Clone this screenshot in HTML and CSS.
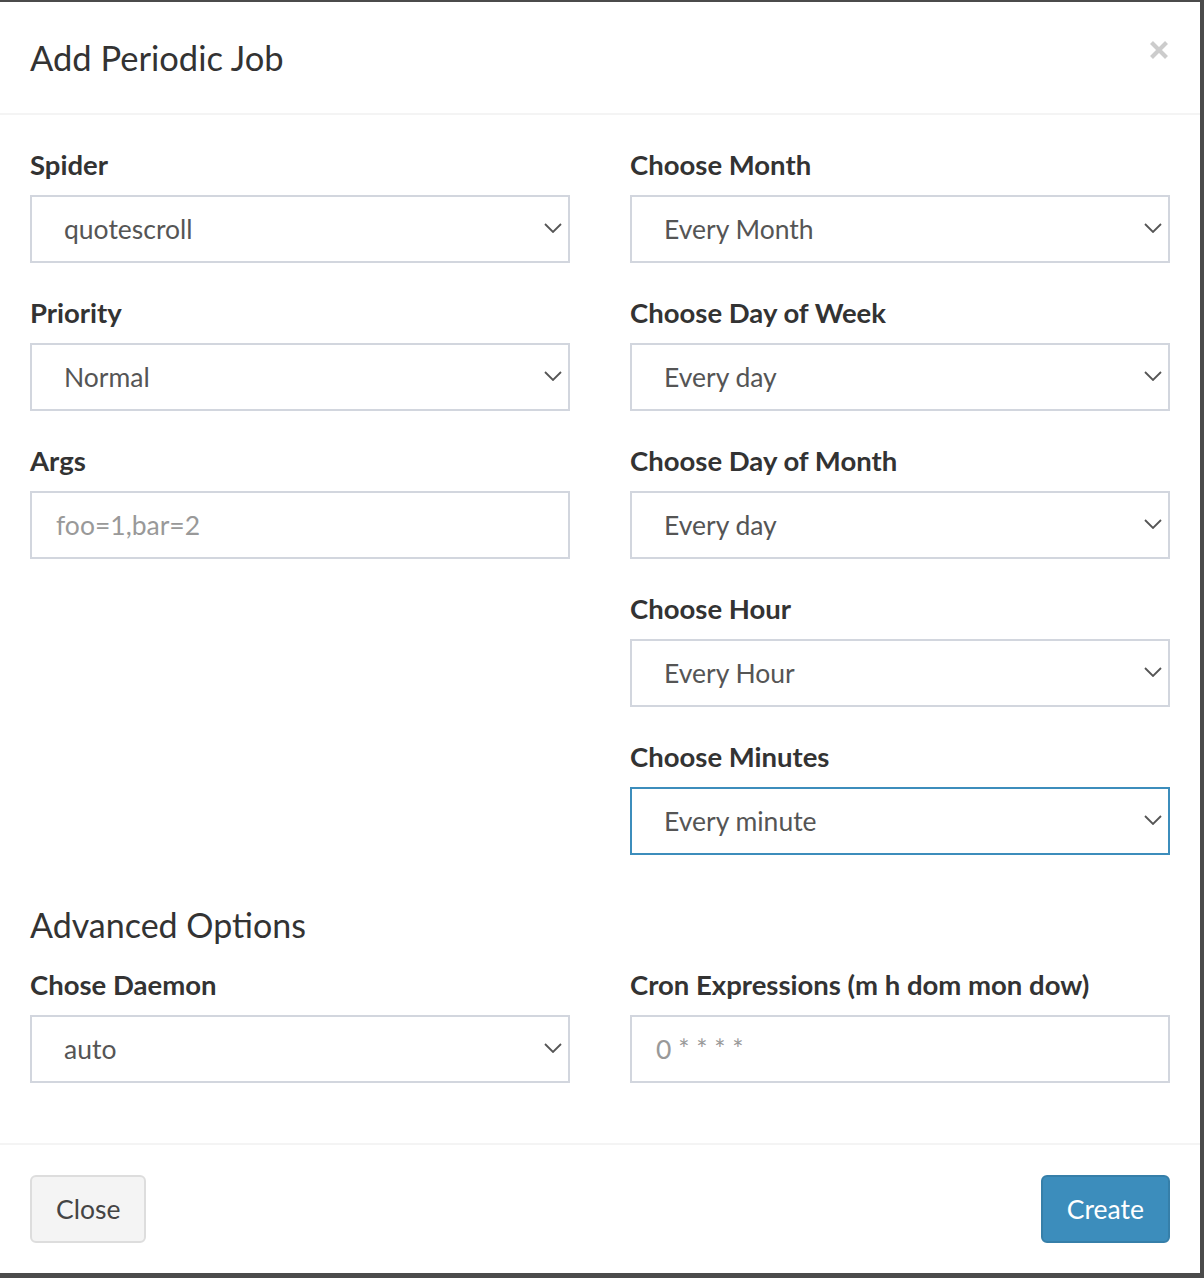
FILE: index.html
```html
<!DOCTYPE html>
<html>
<head>
<meta charset="utf-8">
<title>Add Periodic Job</title>
<link rel="stylesheet" href="styles.css">
</head>
<body>
<div class="modal">
  <div class="modal-header">
    <h4 class="modal-title">Add Periodic Job</h4>
    <button class="close" type="button" aria-label="Close">
      <svg width="20" height="20" viewBox="0 0 20 20"><path d="M2.5 2.5 L17.5 17.5 M17.5 2.5 L2.5 17.5" stroke="#cccccc" stroke-width="4.2" stroke-linecap="butt"/></svg>
    </button>
  </div>
  <div class="modal-body">
    <div class="row">
      <div class="col">
        <div class="form-group">
          <label>Spider</label>
          <div class="select-wrap"><select class="form-control"><option>quotescroll</option></select><svg class="chev" width="18" height="10" viewBox="0 0 18 10"><path d="M1 1 L9 9 L17 1" fill="none" stroke="#555" stroke-width="1.8"/></svg></div>
        </div>
        <div class="form-group">
          <label>Priority</label>
          <div class="select-wrap"><select class="form-control"><option>Normal</option></select><svg class="chev" width="18" height="10" viewBox="0 0 18 10"><path d="M1 1 L9 9 L17 1" fill="none" stroke="#555" stroke-width="1.8"/></svg></div>
        </div>
        <div class="form-group">
          <label>Args</label>
          <input class="form-control input" type="text" placeholder="foo=1,bar=2">
        </div>
      </div>
      <div class="col">
        <div class="form-group">
          <label>Choose Month</label>
          <div class="select-wrap"><select class="form-control"><option>Every Month</option></select><svg class="chev" width="18" height="10" viewBox="0 0 18 10"><path d="M1 1 L9 9 L17 1" fill="none" stroke="#555" stroke-width="1.8"/></svg></div>
        </div>
        <div class="form-group">
          <label>Choose Day of Week</label>
          <div class="select-wrap"><select class="form-control"><option>Every day</option></select><svg class="chev" width="18" height="10" viewBox="0 0 18 10"><path d="M1 1 L9 9 L17 1" fill="none" stroke="#555" stroke-width="1.8"/></svg></div>
        </div>
        <div class="form-group">
          <label>Choose Day of Month</label>
          <div class="select-wrap"><select class="form-control"><option>Every day</option></select><svg class="chev" width="18" height="10" viewBox="0 0 18 10"><path d="M1 1 L9 9 L17 1" fill="none" stroke="#555" stroke-width="1.8"/></svg></div>
        </div>
        <div class="form-group">
          <label>Choose Hour</label>
          <div class="select-wrap"><select class="form-control"><option>Every Hour</option></select><svg class="chev" width="18" height="10" viewBox="0 0 18 10"><path d="M1 1 L9 9 L17 1" fill="none" stroke="#555" stroke-width="1.8"/></svg></div>
        </div>
        <div class="form-group">
          <label>Choose Minutes</label>
          <div class="select-wrap"><select class="form-control focused"><option>Every minute</option></select><svg class="chev" width="18" height="10" viewBox="0 0 18 10"><path d="M1 1 L9 9 L17 1" fill="none" stroke="#555" stroke-width="1.8"/></svg></div>
        </div>
      </div>
    </div>
    <h4 class="section-title">Advanced Options</h4>
    <div class="row">
      <div class="col">
        <div class="form-group">
          <label>Chose Daemon</label>
          <div class="select-wrap"><select class="form-control"><option>auto</option></select><svg class="chev" width="18" height="10" viewBox="0 0 18 10"><path d="M1 1 L9 9 L17 1" fill="none" stroke="#555" stroke-width="1.8"/></svg></div>
        </div>
      </div>
      <div class="col">
        <div class="form-group">
          <label>Cron Expressions (m h dom mon dow)</label>
          <input class="form-control input" type="text" placeholder="0 * * * *">
        </div>
      </div>
    </div>
  </div>
  <div class="modal-footer">
    <button class="btn btn-default" type="button">Close</button>
    <button class="btn btn-primary" type="button">Create</button>
  </div>
</div>
</body>
</html>
```

FILE: styles.css
```css
* { box-sizing: border-box; }
html, body { margin: 0; padding: 0; }
body {
  background: #4b4b4b;
  font-family: "Lato", "Noto Sans", sans-serif;
  font-size: 26.5px;
  line-height: 40px;
  color: #333;
  width: 1204px;
  height: 1278px;
  overflow: hidden;
}
.modal {
  width: 1200px;
  height: 1271px;
  margin-top: 2px;
  background: #fff;
  display: flex;
  flex-direction: column;
}
.modal-header {
  padding: 30px;
  border-bottom: 2px solid #f4f4f4;
  display: flex;
  justify-content: space-between;
  align-items: flex-start;
}
.modal-title {
  margin: 0;
  font-size: 34.5px;
  font-weight: 400;
  line-height: 51px;
  color: #333;
}
.close {
  background: none;
  border: 0;
  padding: 0;
  margin: 8px 1px 0 0;
  width: 20px;
  height: 20px;
  display: block;
  cursor: pointer;
}
.close svg { display: block; }
.modal-body {
  padding: 30px;
  flex: 1;
}
.row {
  display: flex;
  margin: 0 -30px;
}
.col {
  width: 50%;
  padding: 0 30px;
}
.form-group { margin-bottom: 30px; }
label {
  display: block;
  font-size: 27.5px;
  font-weight: 700;
  margin-bottom: 10px;
  line-height: 40px;
}
.form-control {
  display: block;
  width: 100%;
  height: 68px;
  border: 2px solid #d2d6de;
  border-radius: 0;
  background: #fff;
  font-family: inherit;
  font-size: 26.5px;
  color: #555;
  padding: 12px 24px;
  box-shadow: none;
  outline: none;
}
select.form-control {
  -webkit-appearance: none;
  appearance: none;
  padding-left: 32px;
}
.form-control.focused { border-color: #3c8dbc; }
.input::placeholder { color: #999; }
.select-wrap { position: relative; }
.chev {
  position: absolute;
  right: 8px;
  top: 28px;
  pointer-events: none;
}
.section-title {
  margin: 20px 0;
  font-size: 34px;
  font-weight: 400;
  line-height: 40px;
  color: #333;
}
.modal-footer {
  border-top: 2px solid #f4f4f4;
  padding: 30px;
  display: flex;
  justify-content: space-between;
}
.btn {
  height: 68px;
  padding: 12px 24px;
  font-family: inherit;
  font-size: 26.5px;
  line-height: 40px;
  border-radius: 6px;
  border: 2px solid transparent;
  cursor: pointer;
}
.btn-default {
  background: #f4f4f4;
  border-color: #ddd;
  color: #444;
}
.btn-primary {
  background: #3c8dbc;
  border-color: #367fa9;
  color: #fff;
}
```
